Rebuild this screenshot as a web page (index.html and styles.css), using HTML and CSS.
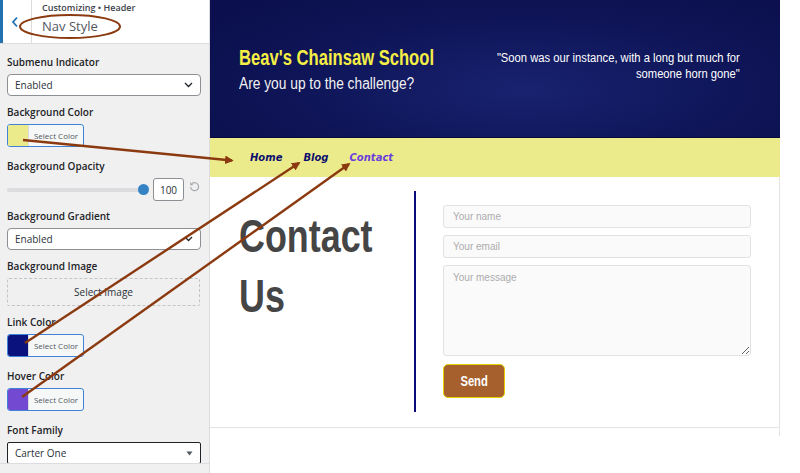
FILE: index.html
```html
<!DOCTYPE html>
<html lang="en">
<head>
<meta charset="utf-8">
<title>Customizer - Nav Style</title>
<link rel="stylesheet" href="styles.css">
</head>
<body>
<div class="app">
  <aside class="panel">
    <div class="panel-head">
      <button class="back" aria-label="Back">
        <svg width="8" height="12" viewBox="0 0 8 12"><path d="M6 1.5 L2 6 L6 10.5" fill="none" stroke="#2271b1" stroke-width="1.8"/></svg>
      </button>
      <div class="title">
        <span class="crumb">Customizing • Header</span>
        <h2>Nav Style</h2>
      </div>
    </div>
    <div class="controls">
      <div class="ctl ctl-select">
        <div class="lbl">Submenu Indicator</div>
        <div class="select"><span>Enabled</span><svg width="9" height="6" viewBox="0 0 9 6"><path d="M1 1 L4.5 4.5 L8 1" fill="none" stroke="#1d2327" stroke-width="1.3"/></svg></div>
      </div>
      <div class="ctl ctl-color">
        <div class="lbl">Background Color</div>
        <div class="color-btn"><span class="swatch sw-yellow"></span><span class="sc">Select Color</span></div>
      </div>
      <div class="ctl ctl-slider">
        <div class="lbl">Background Opacity</div>
        <div class="slider-row">
          <div class="track"><span class="thumb"></span></div>
          <div class="num">100</div>
          <svg class="reset" width="11" height="11" viewBox="0 0 11 11"><path d="M3 2.6 A4 4 0 1 1 1.6 6" fill="none" stroke="#a7aaad" stroke-width="1.2"/><path d="M1.2 1 L1.2 4.2 L4.4 4.2 Z" fill="#a7aaad"/></svg>
        </div>
      </div>
      <div class="ctl ctl-select">
        <div class="lbl">Background Gradient</div>
        <div class="select"><span>Enabled</span><svg width="9" height="6" viewBox="0 0 9 6"><path d="M1 1 L4.5 4.5 L8 1" fill="none" stroke="#1d2327" stroke-width="1.3"/></svg></div>
      </div>
      <div class="ctl ctl-image">
        <div class="lbl">Background Image</div>
        <div class="dashed">Select Image</div>
      </div>
      <div class="ctl ctl-color">
        <div class="lbl">Link Color</div>
        <div class="color-btn"><span class="swatch sw-navy"></span><span class="sc">Select Color</span></div>
      </div>
      <div class="ctl ctl-color">
        <div class="lbl">Hover Color</div>
        <div class="color-btn"><span class="swatch sw-purple"></span><span class="sc">Select Color</span></div>
      </div>
      <div class="ctl">
        <div class="lbl">Font Family</div>
        <div class="select select-focus"><span>Carter One</span><svg width="7" height="5" viewBox="0 0 7 5"><path d="M0.5 0.5 L6.5 0.5 L3.5 4.5 Z" fill="#50575e"/></svg></div>
      </div>
    </div>
    <div class="panel-foot"></div>
  </aside>

  <main class="preview">
    <header class="site-head">
      <div class="brand">
        <h1><span class="cond cond-title">Beav's Chainsaw School</span></h1>
        <p class="tagline"><span class="cond cond-tag">Are you up to the challenge?</span></p>
      </div>
      <p class="quote"><span class="cond cond-quote">"Soon was our instance, with a long but much for<br>someone horn gone"</span></p>
    </header>
    <nav class="site-nav">
      <a href="#">Home</a>
      <a href="#">Blog</a>
      <a href="#" class="hover">Contact</a>
    </nav>
    <section class="content">
      <h2 class="page-title"><span class="cond cond-big">Contact<br>Us</span></h2>
      <div class="divider"></div>
      <form class="contact-form">
        <input type="text" placeholder="Your name">
        <input type="email" placeholder="Your email">
        <textarea placeholder="Your message"></textarea>
        <button type="button" class="send"><span class="cond cond-send">Send</span></button>
      </form>
    </section>
    <div class="preview-foot"></div>
  </main>
</div>

<svg class="annot" width="800" height="473" viewBox="0 0 800 473">
  <defs>
    <marker id="ah" viewBox="0 0 10 10" refX="8" refY="5" markerWidth="3.6" markerHeight="3.6" orient="auto">
      <path d="M0 0 L10 5 L0 10 Z" fill="#8b3a10"/>
    </marker>
  </defs>
  <ellipse cx="70" cy="26.5" rx="50" ry="11.5" fill="none" stroke="#8b3a10" stroke-width="2"/>
  <line x1="23" y1="140" x2="232" y2="160.5" stroke="#8b3a10" stroke-width="2.4" marker-end="url(#ah)"/>
  <line x1="25" y1="343" x2="299" y2="163" stroke="#8b3a10" stroke-width="2.4" marker-end="url(#ah)"/>
  <line x1="22" y1="397" x2="349" y2="164" stroke="#8b3a10" stroke-width="2.4" marker-end="url(#ah)"/>
</svg>
</body>
</html>
```

FILE: styles.css
```css
* {
  box-sizing: border-box;
  margin: 0;
  padding: 0;
}

body {
  margin: 0;
  background: #fff;
  font-family: "Open Sans", "Liberation Sans", sans-serif;
  overflow: hidden;
  position: relative;
  width: 800px;
  height: 473px;
}

.app {
  display: flex;
  height: 473px;
}

/* ---------- Customizer panel ---------- */
.panel {
  width: 210px;
  flex: none;
  background: #f0f0f1;
  border-right: 1px solid #dcdcde;
  display: flex;
  flex-direction: column;
  overflow: hidden;
}

.panel-head {
  height: 44px;
  flex: none;
  display: flex;
  background: #fff;
  border-bottom: 1px solid #dcdcde;
}

.back {
  width: 32px;
  flex: none;
  border: 0;
  border-left: 3px solid #2271b1;
  border-right: 1px solid #dcdcde;
  background: #fff;
  display: flex;
  align-items: center;
  padding-left: 8px;
}

.title {
  padding: 2px 0 0 10px;
}

.crumb {
  display: block;
  font-size: 9px;
  line-height: 11px;
  font-weight: 600;
  color: #3c434a;
}

.title h2 {
  margin-top: 4px;
  font-size: 13px;
  line-height: 18px;
  font-weight: 400;
  color: #50575e;
}

.controls {
  flex: 1;
  overflow: hidden;
  padding: 11px 8px 0 7px;
}

.lbl {
  font-size: 10px;
  line-height: 14px;
  font-weight: 600;
  color: #1d2327;
  margin-bottom: 5px;
  white-space: nowrap;
}

.ctl-select { margin-bottom: 9px; }
.ctl-color { margin-bottom: 12px; }
.ctl-slider { margin-bottom: 8px; }
.ctl-image { margin-bottom: 9px; }

.select {
  height: 22px;
  background: #fff;
  border: 1px solid #8c8f94;
  border-radius: 4px;
  display: flex;
  align-items: center;
  justify-content: space-between;
  padding: 0 7px 0 7px;
  font-size: 10px;
  color: #2c3338;
}

.select-focus {
  border-color: #1d2327;
  border-radius: 2px;
}

.color-btn {
  width: 77px;
  height: 23px;
  display: flex;
  border: 1px solid #3e83d6;
  border-radius: 3px;
  overflow: hidden;
  background: #f6f7f7;
}

.swatch {
  width: 21px;
  flex: none;
  border-right: 1px solid #dcdcde;
}

.sw-yellow { background: #eceb8c; }
.sw-navy { background: #0a127e; }
.sw-purple { background: #7349d2; }

.sc {
  flex: 1;
  display: flex;
  align-items: center;
  justify-content: center;
  font-size: 8px;
  color: #50575e;
}

.slider-row {
  display: flex;
  align-items: center;
  height: 23px;
}

.track {
  position: relative;
  width: 137px;
  height: 4px;
  background: #dcdcde;
  border-radius: 2px;
}

.thumb {
  position: absolute;
  right: -5px;
  top: -4px;
  width: 11px;
  height: 11px;
  border-radius: 50%;
  background: #3582c4;
}

.num {
  margin-left: 9px;
  width: 31px;
  height: 23px;
  border: 1px solid #8c8f94;
  border-radius: 3px;
  background: #fff;
  display: flex;
  align-items: center;
  justify-content: center;
  font-size: 10px;
  color: #2c3338;
}

.reset {
  margin-left: 5px;
  margin-top: -6px;
}

.dashed {
  width: 193px;
  height: 28px;
  border: 1px dashed #c3c4c7;
  border-radius: 2px;
  display: flex;
  align-items: center;
  justify-content: center;
  font-size: 10px;
  color: #2c3338;
}

.panel-foot {
  flex: none;
  height: 10px;
  border-top: 1px solid #dcdcde;
}

/* ---------- Site preview ---------- */
.preview {
  width: 570px;
  flex: none;
  display: flex;
  flex-direction: column;
  font-family: "Liberation Sans", Arial, sans-serif;
}

.cond {
  display: inline-block;
  white-space: nowrap;
  transform-origin: left top;
}

.cond-title { transform: scaleX(0.755); }
.cond-tag { transform: scaleX(0.86); }
.cond-quote { transform: scaleX(0.935); transform-origin: right top; text-align: right; }
.cond-big { transform: scaleX(0.78); }
.cond-send { transform: scaleX(0.8); transform-origin: center; }

.site-head {
  height: 138px;
  flex: none;
  display: flex;
  justify-content: space-between;
  align-items: flex-start;
  padding: 45px 40px 0 29px;
  background: radial-gradient(ellipse 70% 90% at 55% 65%, #18226f 0%, #0e1456 60%, #0b0f4d 100%);
  border-bottom: 1px solid #070a3a;
}

.brand {
  width: 220px;
  flex: none;
}

.brand h1 {
  font-size: 22px;
  line-height: 26px;
  font-weight: 700;
  color: #f4ee45;
  white-space: nowrap;
}

.tagline {
  margin-top: 3px;
  font-size: 16px;
  line-height: 20px;
  color: #f2f2f2;
  white-space: nowrap;
}

.quote {
  margin-top: 5px;
  font-size: 12px;
  line-height: 16px;
  color: #fff;
  text-align: right;
}

.site-nav {
  height: 39px;
  flex: none;
  display: flex;
  align-items: center;
  gap: 21px;
  padding-left: 40px;
  background: #eceb8c;
}

.site-nav a {
  font-family: "DejaVu Sans", sans-serif;
  font-size: 10px;
  font-weight: 700;
  font-style: italic;
  color: #0c0f6e;
  text-decoration: none;
}

.site-nav a.hover {
  color: #6a3ddd;
}

.content {
  flex: none;
  display: flex;
  align-items: flex-start;
  padding: 14px 28px 15px 29px;
  border-right: 1px solid #e3e3e3;
  border-bottom: 1px solid #e3e3e3;
}

.page-title {
  width: 175px;
  flex: none;
  margin-top: 15px;
  font-size: 46px;
  line-height: 60px;
  font-weight: 700;
  color: #454545;
}

.divider {
  width: 2px;
  height: 221px;
  flex: none;
  background: #0a0a7a;
}

.contact-form {
  flex: 1;
  margin-left: 27px;
  padding-top: 14px;
  display: flex;
  flex-direction: column;
  align-items: stretch;
  gap: 7px;
}

.contact-form input,
.contact-form textarea {
  height: 23px;
  border: 1px solid #e2e2e2;
  border-radius: 3px;
  background: #fafafa;
  padding: 0 9px;
  font-family: inherit;
  font-size: 10px;
  color: #444;
  outline: none;
}

.contact-form textarea {
  height: 91px;
  padding-top: 6px;
  resize: vertical;
}

.contact-form ::placeholder {
  color: #acacac;
}

.send {
  margin-top: 1px;
  align-self: flex-start;
  width: 62px;
  height: 34px;
  background: #a6602d;
  border: 1px solid #e5d200;
  border-radius: 5px;
  color: #fff;
  font-family: inherit;
  font-size: 14px;
  font-weight: 700;
}

.preview-foot {
  height: 8px;
  flex: none;
  border-right: 1px solid #e3e3e3;
}

/* ---------- Annotation overlay ---------- */
.annot {
  position: absolute;
  left: 0;
  top: 0;
  pointer-events: none;
  z-index: 10;
}
```
